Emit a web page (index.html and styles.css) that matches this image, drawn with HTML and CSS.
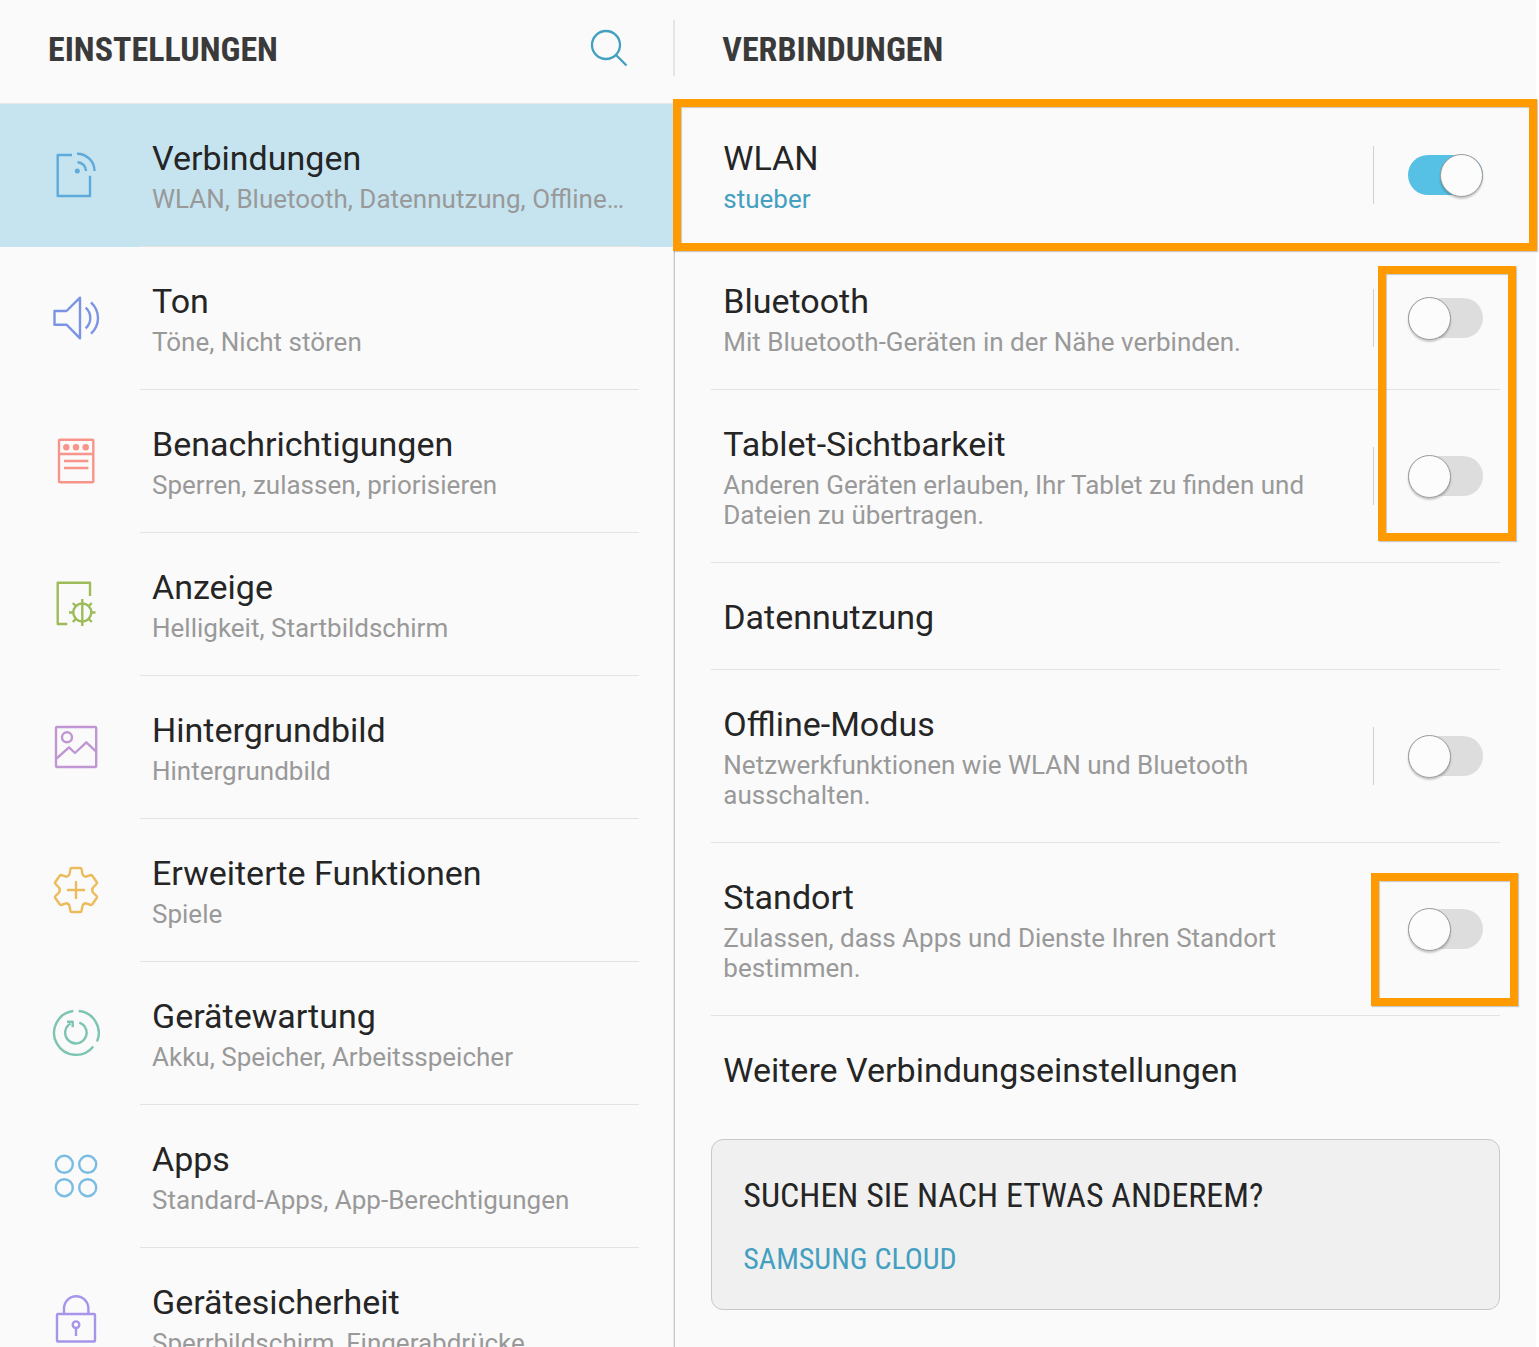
FILE: index.html
```html
<!DOCTYPE html>
<html lang="de">
<head>
<meta charset="utf-8">
<meta name="viewport" content="width=device-width, initial-scale=1">
<title>Einstellungen</title>
<link rel="stylesheet" href="styles.css">
</head>
<body>
<div class="app">
  <aside class="sidebar">
    <header class="bar">
      <h1 class="heading">EINSTELLUNGEN</h1>
      <button class="search" type="button" aria-label="Suchen">
        <svg viewBox="0 0 40 40"><circle cx="17" cy="17" r="14"/><path d="M27 27l10.500 10.500"/></svg>
      </button>
    </header>
    <nav class="menu">
      <a class="entry active" href="#verbindungen">
        <svg class="icon blue" viewBox="0 0 48 48"><path d="M20 4H5.700V45H38V24.700M25.500 11.200a8.800 8.800 0 0 1 8.500 8.800M25 2.700A17.400 17.400 0 0 1 42.500 20"/><circle class="dot" cx="25.300" cy="20" r="2.500"/></svg>
        <span class="text"><span class="title">Verbindungen</span><span class="sub">WLAN, Bluetooth, Datennutzung, Offline-Modus</span></span>
      </a>
      <a class="entry" href="#ton">
        <svg class="icon indigo" viewBox="0 0 48 48"><path d="M2.500 17H14.500L28 3.700V44.300L14.500 30.700H2.500zM33.700 13.700q4.600 4.300 4.600 10.300t-4.600 10.300M39 8.300q7 6.700 7 15.700t-7 15.700"/></svg>
        <span class="text"><span class="title">Ton</span><span class="sub">Töne, Nicht stören</span></span>
      </a>
      <a class="entry" href="#benachrichtigungen">
        <svg class="icon red" viewBox="0 0 48 48"><rect x="7" y="2.700" width="34.300" height="42.600" rx="1"/><path d="M7 17H41.300M12 24H36.300M12 31H36.300"/><g class="dot"><circle cx="14.300" cy="10.300" r="3.200"/><circle cx="24" cy="10.300" r="3.200"/><circle cx="33.700" cy="10.300" r="3.200"/></g></svg>
        <span class="text"><span class="title">Benachrichtigungen</span><span class="sub">Sperren, zulassen, priorisieren</span></span>
      </a>
      <a class="entry" href="#anzeige">
        <svg class="icon green" viewBox="0 0 48 48"><path d="M38 16V2.700H5.700V44H15.300"/><circle cx="30.300" cy="32.500" r="9"/><path d="M30.300 19V46M17 32.500h4M39.500 32.500h4M20.800 23l3 3M39.800 23l-3 3M20.800 42l3-3M39.800 42l-3-3"/></svg>
        <span class="text"><span class="title">Anzeige</span><span class="sub">Helligkeit, Startbildschirm</span></span>
      </a>
      <a class="entry" href="#hintergrundbild">
        <svg class="icon purple" viewBox="0 0 48 48"><rect x="4" y="4" width="40.200" height="40" rx="1"/><circle cx="15" cy="14.300" r="5"/><path d="M4 36L17 24.300 23 30 34.300 19.300 44.200 28.700"/></svg>
        <span class="text"><span class="title">Hintergrundbild</span><span class="sub">Hintergrundbild</span></span>
      </a>
      <a class="entry" href="#erweitert">
        <svg class="icon yellow" viewBox="0 0 48 48"><path d="M19.500 2h9q.800 0 1 1l1 5q.800 2.600 3.500 2.700l5-1.700q1 0 1.500 1l4.500 6.500q0 1-.500 1.500l-3.500 3.500q-1.600 2.500 0 5l3.500 3.500q.500.500.500 1.500L40.500 38q-.500 1-1.500 1l-5-1.700q-2.700.100-3.500 2.700l-1 5q-.200 1-1 1h-9q-.800 0-1-1l-1-5q-.800-2.600-3.500-2.700L9 39q-1 0-1.500-1L3 31.500q0-1 .500-1.500L7 26.500q1.600-2.500 0-5L3.500 18q-.500-.500-.500-1.500L7.500 10q.500-1 1.500-1l5 1.700q2.700-.100 3.500-2.700l1-5q.200-1 1-1zM15 24H33M24 15V33"/></svg>
        <span class="text"><span class="title">Erweiterte Funktionen</span><span class="sub">Spiele</span></span>
      </a>
      <a class="entry" href="#geraetewartung">
        <svg class="icon teal" viewBox="0 0 48 48"><path d="M26.700 2A22 22 0 0 1 45 32.500M41.300 37.500A22 22 0 1 1 21.300 2M27.300 13.600A10.700 10.700 0 1 1 18.500 14.500M15 12.700h5.700v5.600"/></svg>
        <span class="text"><span class="title">Gerätewartung</span><span class="sub">Akku, Speicher, Arbeitsspeicher</span></span>
      </a>
      <a class="entry" href="#apps">
        <svg class="icon sky" viewBox="0 0 48 48"><circle cx="12.300" cy="12.300" r="8.500"/><circle cx="35.700" cy="12.300" r="8.500"/><circle cx="12.300" cy="35.700" r="8.500"/><circle cx="35.700" cy="35.700" r="8.500"/></svg>
        <span class="text"><span class="title">Apps</span><span class="sub">Standard-Apps, App-Berechtigungen</span></span>
      </a>
      <a class="entry" href="#geraetesicherheit">
        <svg class="icon violet" viewBox="0 0 48 48"><rect x="5" y="19" width="38" height="27.500" rx="1"/><path d="M12 19v-5.500a12.200 12.200 0 0 1 24.400 0V19M24 33v8"/><circle cx="24" cy="29.700" r="3.300"/></svg>
        <span class="text"><span class="title">Gerätesicherheit</span><span class="sub">Sperrbildschirm, Fingerabdrücke</span></span>
      </a>
    </nav>
  </aside>

  <main class="detail">
    <header class="bar">
      <h2 class="heading">VERBINDUNGEN</h2>
    </header>
    <div class="options">
      <div class="row">
        <label class="text" for="wlan"><span class="title">WLAN</span><span class="sub link">stueber</span></label>
        <span class="control"><input class="switch" type="checkbox" role="switch" id="wlan" checked></span>
        <span class="mark mark-row"></span>
      </div>
      <div class="row">
        <label class="text" for="bluetooth"><span class="title">Bluetooth</span><span class="sub">Mit Bluetooth-Geräten in der Nähe verbinden.</span></label>
        <span class="control"><input class="switch" type="checkbox" role="switch" id="bluetooth"></span>
        <span class="mark mark-pair"></span>
      </div>
      <div class="row">
        <label class="text" for="sichtbar"><span class="title">Tablet-Sichtbarkeit</span><span class="sub">Anderen Geräten erlauben, Ihr Tablet zu finden und Dateien zu übertragen.</span></label>
        <span class="control"><input class="switch" type="checkbox" role="switch" id="sichtbar"></span>
      </div>
      <a class="row" href="#datennutzung"><span class="title">Datennutzung</span></a>
      <div class="row">
        <label class="text" for="offline"><span class="title">Offline-Modus</span><span class="sub">Netzwerkfunktionen wie WLAN und Bluetooth ausschalten.</span></label>
        <span class="control"><input class="switch" type="checkbox" role="switch" id="offline"></span>
      </div>
      <div class="row">
        <label class="text" for="standort"><span class="title">Standort</span><span class="sub">Zulassen, dass Apps und Dienste Ihren Standort bestimmen.</span></label>
        <span class="control"><input class="switch" type="checkbox" role="switch" id="standort"></span>
        <span class="mark mark-single"></span>
      </div>
      <a class="row last" href="#weitere"><span class="title">Weitere Verbindungseinstellungen</span></a>
      <section class="card">
        <h3 class="card-title">SUCHEN SIE NACH ETWAS ANDEREM?</h3>
        <a class="card-link" href="#cloud">SAMSUNG CLOUD</a>
      </section>
    </div>
  </main>
</div>
</body>
</html>
```
FILE: styles.css
```css
*,
*::before,
*::after {
  box-sizing: border-box;
}

body {
  margin: 0;
  background: #fff;
  color: #252525;
  font-family: Roboto, "Liberation Sans", sans-serif;
}

a {
  color: inherit;
  text-decoration: none;
}

.app {
  display: grid;
  grid-template-columns: 43.9% 1fr;
  height: 100vh;
  padding-right: 3px;
  overflow: hidden;
  background: #fafafa content-box;
}

.sidebar,
.detail {
  min-width: 0;
}

/* Header bars */
.bar {
  display: flex;
  align-items: center;
  justify-content: space-between;
  height: 104px;
  padding: 0 45px 6px 48px;
  border-bottom: 1px solid #e8e8e8;
  background: linear-gradient(#e5e5e5, #e5e5e5) 100% 20px / 1px 56px no-repeat;
}

.detail .bar {
  border-bottom-color: transparent;
  background-position: 0 20px;
}

.heading {
  margin: 0;
  color: #3a3a3a;
  font: 700 34px/40px "Roboto Condensed", "Liberation Sans Narrow", Roboto, sans-serif;
}

.search {
  width: 40px;
  height: 40px;
  margin-bottom: 2px;
  padding: 0;
  border: 0;
  background: none;
}

.search svg {
  display: block;
  fill: none;
  stroke: #449fc0;
  stroke-width: 2.3;
}

/* Rows */
.entry {
  display: flex;
  align-items: center;
  gap: 52px;
  position: relative;
  padding: 34px 48px 33px 52px;
}

.entry::after {
  content: "";
  position: absolute;
  right: 35px;
  bottom: 0;
  left: 140px;
  height: 1px;
  background: #e3e3e3;
}

.active {
  background: #c5e4f0;
}

.icon {
  flex: none;
  width: 48px;
  height: 48px;
  margin-bottom: 2px;
  fill: none;
  stroke: currentColor;
  stroke-width: 2.4;
  stroke-linejoin: round;
}

.dot {
  fill: currentColor;
  stroke: none;
}

.blue { color: #5eaadb; }
.indigo { color: #7b93e4; }
.red { color: #f8948a; }
.green { color: #9dbb58; }
.purple { color: #c197d3; }
.yellow { color: #ebbb5c; }
.teal { color: #7dc4b3; }
.sky { color: #79bde3; }
.violet { color: #a695e8; }

.text {
  display: flex;
  flex: 1;
  flex-direction: column;
  gap: 6px;
  min-width: 0;
}

.title {
  font-size: 34px;
  line-height: 40px;
}

.sub {
  color: #999;
  font-size: 26px;
  line-height: 30px;
}

.entry .sub {
  overflow: hidden;
  text-overflow: ellipsis;
  white-space: nowrap;
}

.sub.link {
  color: #449fc0;
}

.options {
  height: 100%;
  padding: 0 36px;
  border-left: 1px solid #c8c8c8;
  box-shadow: -1px 0 #e8e8e8;
}

.row {
  display: flex;
  align-items: center;
  position: relative;
  padding: 34px 17px 32px 12px;
  border-bottom: 1px solid #e3e3e3;
}

.row.last {
  border-bottom-color: transparent;
}

.row .text {
  padding-right: 60px;
}

.control {
  display: flex;
  align-items: center;
  height: 58px;
  margin-bottom: 2px;
  padding-left: 34px;
  border-left: 1px solid #d0d0d0;
}

/* Switches */
.switch {
  appearance: none;
  display: flex;
  align-items: center;
  width: 75px;
  height: 40px;
  margin: 0;
  border-radius: 20px;
  background: #ddd;
}

.switch::before {
  content: "";
  width: 43px;
  height: 43px;
  flex: none;
  border: 1px solid #999;
  border-radius: 50%;
  background: #fcfcfc;
  box-shadow: 0 2px 2px #0003;
}

.switch:checked {
  justify-content: flex-end;
  background: #57c0e5;
}

/* Highlight frames drawn over the settings */
.mark {
  position: absolute;
  border: 8px solid #ff9b00;
  box-shadow: 1px 1px 1px #0003, inset 1px 1px 1px #0003;
  pointer-events: none;
}

.mark-row {
  inset: -5px -37px -5px -38px;
}

.mark-pair {
  top: 19px;
  right: -16px;
  width: 138px;
  height: 275px;
  z-index: 1;
}

.mark-single {
  top: 30px;
  right: -18px;
  width: 147px;
  height: 133px;
}

/* Suggestions */
.card {
  display: flex;
  flex-direction: column;
  align-items: flex-start;
  gap: 26px;
  margin-top: 16px;
  padding: 35px 31px 32px;
  border: 1px solid #c8c8c8;
  border-radius: 12px;
  background: #f0f0f0;
}

.card-title {
  margin: 0;
  font: 400 34px/40px "Roboto Condensed", "Liberation Sans Narrow", Roboto, sans-serif;
}

.card-link {
  color: #449fc0;
  font: 400 30px/36px "Roboto Condensed", "Liberation Sans Narrow", Roboto, sans-serif;
}
```
